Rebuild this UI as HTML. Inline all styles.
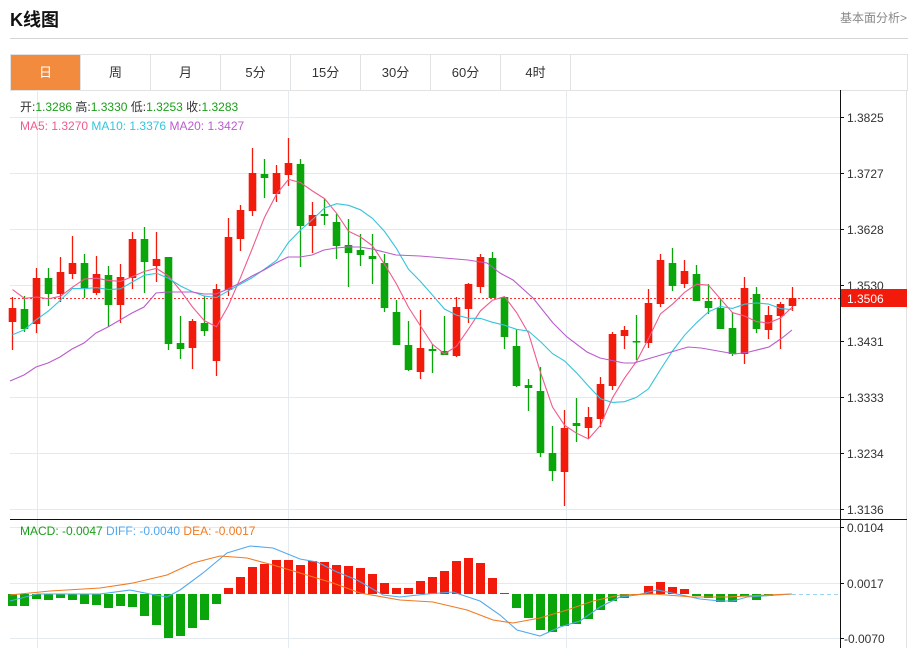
<!DOCTYPE html>
<html><head><meta charset="utf-8"><style>
body{margin:0;width:913px;height:648px;overflow:hidden;background:#fff;font-family:"Liberation Sans","Noto Sans CJK SC",sans-serif;position:relative}
.t{position:absolute;left:10px;top:6px;font-size:18px;font-weight:bold;color:#111}
.r{position:absolute;right:6px;top:9px;font-size:12px;color:#888}
.hl{position:absolute;left:10px;top:38px;width:898px;height:1px;background:#d5d5d5}
.tabs{position:absolute;left:10px;top:54px;width:896px;height:35px;border:1px solid #e2e2e2;border-bottom:1px solid #e2e2e2}
.tab{position:absolute;top:0;width:69px;height:35px;line-height:35px;text-align:center;font-size:13px;color:#333;border-right:1px solid #e2e2e2}
.tab.a{background:#f38b3f;color:#fff}
.frame{position:absolute;left:10px;top:90px;width:896px;height:558px;border-right:1px solid #e2e2e2}
svg{position:absolute;left:0;top:0}
</style></head><body>
<div class="t">K线图</div><div class="r">基本面分析&gt;</div><div class="hl"></div>
<div class="tabs">
<div class="tab a" style="left:0">日</div><div class="tab" style="left:70px">周</div><div class="tab" style="left:140px">月</div><div class="tab" style="left:210px">5分</div><div class="tab" style="left:280px">15分</div><div class="tab" style="left:350px">30分</div><div class="tab" style="left:420px">60分</div><div class="tab" style="left:490px">4时</div>
</div>
<div class="frame"></div>
<svg id="s" width="913" height="648" xmlns="http://www.w3.org/2000/svg" font-family="Liberation Sans, Noto Sans CJK SC, sans-serif" font-size="12">
<g stroke="#e3ebf1" stroke-width="1">
<line x1="10" y1="117.5" x2="840" y2="117.5"/><line x1="10" y1="173.5" x2="840" y2="173.5"/><line x1="10" y1="229.5" x2="840" y2="229.5"/><line x1="10" y1="285.5" x2="840" y2="285.5"/><line x1="10" y1="341.5" x2="840" y2="341.5"/><line x1="10" y1="397.5" x2="840" y2="397.5"/><line x1="10" y1="453.5" x2="840" y2="453.5"/><line x1="10" y1="509.5" x2="840" y2="509.5"/>
<line x1="10" y1="527.5" x2="840" y2="527.5"/><line x1="10" y1="583.5" x2="840" y2="583.5"/><line x1="10" y1="638.5" x2="840" y2="638.5"/>
<line x1="37.5" y1="90" x2="37.5" y2="648"/><line x1="288.5" y1="90" x2="288.5" y2="648"/><line x1="566.5" y1="90" x2="566.5" y2="648"/>
</g>
<line x1="10" y1="298.5" x2="840" y2="298.5" stroke="#f33" stroke-dasharray="2,2"/>
<line x1="792" y1="594.5" x2="840" y2="594.5" stroke="#9cd3ef" stroke-dasharray="4,3"/>
<g id="c"></g>
<line x1="840.5" y1="90" x2="840.5" y2="648" stroke="#111"/>
<line x1="10" y1="519.5" x2="907" y2="519.5" stroke="#111"/>
<g stroke="#111"><line x1="840" y1="117.5" x2="844" y2="117.5"/><line x1="840" y1="173.5" x2="844" y2="173.5"/><line x1="840" y1="229.5" x2="844" y2="229.5"/><line x1="840" y1="285.5" x2="844" y2="285.5"/><line x1="840" y1="341.5" x2="844" y2="341.5"/><line x1="840" y1="397.5" x2="844" y2="397.5"/><line x1="840" y1="453.5" x2="844" y2="453.5"/><line x1="840" y1="509.5" x2="844" y2="509.5"/><line x1="840" y1="527.5" x2="844" y2="527.5"/><line x1="840" y1="583.5" x2="844" y2="583.5"/><line x1="840" y1="638.5" x2="844" y2="638.5"/></g>
<g fill="#333">
<text x="847" y="122">1.3825</text><text x="847" y="178">1.3727</text><text x="847" y="234">1.3628</text><text x="847" y="290">1.3530</text><text x="847" y="346">1.3431</text><text x="847" y="402">1.3333</text><text x="847" y="458">1.3234</text><text x="847" y="514">1.3136</text>
<text x="847" y="532">0.0104</text><text x="847" y="588">0.0017</text><text x="844" y="643">-0.0070</text>
</g>
<rect x="841" y="289" width="66" height="18" fill="#f21a0a"/>
<text x="847" y="303" fill="#fff">1.3506</text>
<text x="20" y="111" fill="#333">开:<tspan fill="#1a9e1a">1.3286</tspan>  高:<tspan fill="#1a9e1a">1.3330</tspan>  低:<tspan fill="#1a9e1a">1.3253</tspan>  收:<tspan fill="#1a9e1a">1.3283</tspan></text>
<text x="20" y="130" fill="#ef5b8c">MA5: 1.3270 <tspan fill="#35c4dc">MA10: 1.3376</tspan> <tspan fill="#b95ccc">MA20: 1.3427</tspan></text>
<text x="20" y="535" fill="#1a9e1a">MACD: -0.0047 <tspan fill="#52a8ee">DIFF: -0.0040</tspan> <tspan fill="#f07a22">DEA: -0.0017</tspan></text>
</svg>
<script>
var K=[[1,308,322,297,350],[0,309,329,296,332],[1,278,324,268,333],[0,278,294,268,306],[1,272,294,257,302],[1,263,274,236,279],[0,263,288,254,298],[1,274,293,256,295],[0,275,305,266,327],[1,277,305,264,323],[1,239,278,232,289],[0,239,262,227,293],[1,259,266,232,282],[0,257,344,257,350],[0,343,349,316,359],[1,321,348,319,369],[0,323,331,296,336],[1,289,361,284,376],[1,237,290,218,296],[1,210,239,205,251],[1,173,211,148,216],[0,174,178,159,198],[1,173,194,165,202],[1,163,175,138,186],[0,164,226,159,267],[1,215,226,202,253],[0,214,216,199,225],[0,222,246,214,259],[0,245,253,219,287],[0,250,255,234,266],[0,256,259,234,284],[0,263,308,254,312],[0,312,345,300,345],[0,345,370,321,371],[1,348,372,310,379],[0,349,351,344,373],[0,351,355,316,355],[1,307,356,297,357],[1,284,309,283,323],[1,257,287,254,293],[0,258,298,252,298],[0,297,337,297,349],[0,346,386,329,387],[0,385,388,379,411],[0,391,453,367,457],[0,453,471,426,481],[1,428,472,410,506],[0,423,426,398,442],[1,417,428,407,438],[1,384,419,377,427],[1,334,386,332,390],[1,330,336,326,349],[0,341,342,315,360],[1,303,343,289,348],[1,260,304,254,307],[0,263,286,248,291],[1,271,284,260,288],[0,274,301,265,301],[0,301,308,284,314],[0,308,329,298,329],[0,328,354,312,356],[1,288,354,277,364],[0,294,329,287,333],[1,315,330,306,339],[1,304,316,302,349],[1,298,306,287,311]];
var M=[606,606,599,600,598,600,604,605,608,606,607,616,625,638,636,628,620,604,588,577,567,564,560,560,565,561,562,565,566,568,574,583,588,588,581,577,571,561,558,563,578,593,608,618,630,632,626,624,619,610,601,598,595,586,582,587,589,596,598,602,602,596,600,596];
var R='#f21a0a',G='#0aa50a',h='';
function X(i){return 12.5+12*i}
K.forEach(function(k,i){var c=k[0]?R:G,x=X(i);h+='<line x1="'+x+'" y1="'+k[3]+'" x2="'+x+'" y2="'+k[4]+'" stroke="'+c+'" stroke-width="1.3"/>';h+='<rect x="'+(x-3.8)+'" y="'+k[1]+'" width="7.6" height="'+Math.max(1.5,k[2]-k[1])+'" fill="'+c+'"/>';});
M.forEach(function(m,i){var x=X(i),up=m<594;h+='<rect x="'+(x-4.5)+'" y="'+(up?m:594)+'" width="9" height="'+Math.max(1,Math.abs(m-594))+'" fill="'+(up?R:G)+'"/>';});
var cl=[380,380,380,380,380,285,285,285,285].concat(K.map(function(k){return k[0]?k[1]:k[2]}));
function ma(n){var p=[];for(var i=9;i<cl.length;i++){var s=0;for(var j=0;j<n;j++)s+=cl[i-j];p.push(X(i-9).toFixed(1)+','+(s/n).toFixed(1));}return p.join(' ');}
function pl(p,c){h+='<polyline points="'+p+'" fill="none" stroke="'+c+'" stroke-width="1.1"/>';}
pl(ma(5),'#ef5b8c');pl(ma(10),'#35c4dc');
pl('10,381 24,375 36,367 48,363 60,357 72,349 84,343 96,333 108,327 120,320 132,313 144,307 156,293 168,292 180,292 192,292 204,294 216,294 228,289 240,283 252,276 264,270 276,263 288,257 300,257 312,255 324,250 336,248 348,247 360,247 372,249 384,252 396,255 420,256 444,258 468,260 487,263 500,273 513,280 533,298 553,323 567,337 587,352 600,358 624,363 634,363 661,355 688,347 701,348 735,354 749,352 769,347 782,338 792,330','#b95ccc');
pl('10,601 37,594 67,594 100,594 130,590 150,594 167,597 180,590 203,573 227,553 250,546 273,548 300,559 317,562 337,572 357,580 383,595 400,597 427,594 453,592 480,601 500,615 517,630 540,636 560,627 580,621 600,607 620,597 637,595 657,590 677,594 700,599 720,601 733,601 747,597 763,596 792,594','#52a8ee');
pl('10,595 50,591 100,588 133,583 167,575 193,563 220,556 247,558 273,565 300,573 333,583 360,593 400,600 433,602 467,610 493,620 513,623 540,618 567,610 593,601 620,595 653,594 693,597 727,597 767,595 792,594','#f07a22');
document.getElementById('c').innerHTML=h;
</script>
</body></html>
